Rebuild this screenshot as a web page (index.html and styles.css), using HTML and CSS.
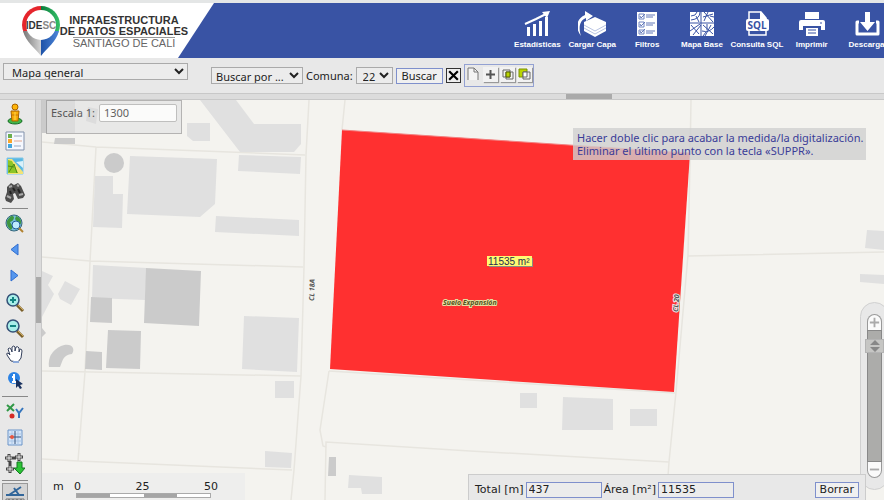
FILE: index.html
```html
<!DOCTYPE html>
<html lang="es">
<head>
<meta charset="utf-8">
<meta name="viewport" content="width=device-width, initial-scale=1">
<title>IDESC - Geovisor</title>
<link rel="stylesheet" href="styles.css">
</head>
<body>
<header class="banner">
  <div class="brand">
    <svg class="brand-pin" viewBox="0 0 40 50" aria-hidden="true">
      <defs>
        <linearGradient id="g-grey" x1="0" x2="1"><stop offset="0" stop-color="#777"/><stop offset="1" stop-color="#d4d4d4"/></linearGradient>
        <linearGradient id="g-blue" x1="0" x2="1"><stop offset="0" stop-color="#1d52a8"/><stop offset="1" stop-color="#4d86d8"/></linearGradient>
        <linearGradient id="g-green" x1="0" x2="1"><stop offset="0" stop-color="#0c7c3c"/><stop offset="1" stop-color="#35c26a"/></linearGradient>
      </defs>
      <path d="M20 0A19 19 0 0 0 1 19Q1 23 3 27H20Z" fill="#e5252c"/>
      <path d="M20 0A19 19 0 0 1 39 19Q39 23 37 27H20Z" fill="url(#g-green)"/>
      <path d="M2 25C5 36 14 42 20 50V25Z" fill="url(#g-grey)"/>
      <path d="M38 25C35 36 26 42 20 50V25Z" fill="url(#g-blue)"/>
      <circle cx="20" cy="19" r="15" fill="#fff"/>
      <text x="20" y="23" text-anchor="middle" class="pin-text">IDE<tspan fill="#888">SC</tspan></text>
    </svg>
    <div class="brand-name">
      <strong>INFRAESTRUCTURA</strong>
      <strong>DE DATOS ESPACIALES</strong>
      <span>SANTIAGO DE CALI</span>
    </div>
  </div>
  <nav class="menu">
    <a href="#"><svg viewBox="0 0 28 26"><path d="M4 16h3v9H4zM10 13h3v12h-3zM16 10h3v15h-3zM22 6h3v19h-3z" fill="#fff"/><path d="M2 13L13 8 23 3" fill="none" stroke="#fff" stroke-width="2"/><path d="M19 1l8-1-3 7z" fill="#fff"/></svg>Estadísticas</a>
    <a href="#"><svg viewBox="0 0 28 26"><path d="M17 6l11 5v9l-11 6-11-6v-9z" fill="#fff"/><path d="M6 14l11 6 11-6M6 17l11 6 11-6" fill="none" stroke="#b8c3e2"/><path d="M3 25C-3 17-2 8 7 4V0l8 5-7 5V7C2 9 0 16 3 25z" fill="#fff"/></svg>Cargar Capa</a>
    <a href="#"><svg viewBox="0 0 28 26"><path d="M4 1h20v24H4z" fill="#fff"/><path d="M6 3h5v5H6zM6 11h5v5H6zM6 19h5v4H6z" fill="#fff" stroke="#7186c3"/><path d="M7 5l1 2 4-4M7 13l1 2 4-4M7 20l1 2 4-4M13 4h9M13 6h7M13 12h9M13 14h7M13 20h9M13 22h7" fill="none" stroke="#6379b9"/></svg>Filtros</a>
    <a href="#"><svg viewBox="0 0 28 26"><path d="M2 1h24v24H2z" fill="#fff"/><path d="M13 1v24M2 12h24M3 5q5 0 6-4M3 9q9-1 9-8M8 5l3 6M16 1l9 10M15 6l10-3M20 1l-4 9M22 5l4 1M2 20l10-7M5 24l8-10M3 14l8 9M15 14l10 9M14 20q7 2 12-4M19 13v6M18 21l-3 4M23 14l-6 11" fill="none" stroke="#3953a4"/></svg>Mapa Base</a>
    <a href="#"><svg viewBox="0 0 28 26"><path d="M6 9V1h12l5 6v2M6 19v5h17v-5" fill="none" stroke="#fff" stroke-width="1.500"/><path d="M17 0l7 8h-7z" fill="#fff"/><rect x="3" y="8" width="23" height="12" rx="2" fill="#fff"/><text x="14" y="18" text-anchor="middle" class="sql-text">SQL</text></svg>Consulta SQL</a>
    <a href="#"><svg viewBox="0 0 28 26"><path d="M7 1h14v7H7zM3 9h22q2 0 2 2v8h-4v-4H5v4H1v-8q0-2 2-2zM8 17h12v8H8z" fill="#fff"/><path d="M22 12h2M10 19h8M10 22h8" stroke="#3953a4"/></svg>Imprimir</a>
    <a href="#"><svg viewBox="0 0 28 26"><path d="M12 1h5v10h5l-7.500 9L7 11h5z" fill="#fff"/><path d="M6 11H4v12h21V11h-2" fill="none" stroke="#fff" stroke-width="3" stroke-linejoin="round"/></svg>Descarga</a>
  </nav>
</header>

<form class="toolbar">
  <select class="map-select" aria-label="Mapa"><option>Mapa general</option></select>
  <div class="search">
    <select class="by-select" aria-label="Buscar por"><option>Buscar por ...</option></select>
    <label for="comuna">Comuna:</label>
    <select class="num-select" id="comuna"><option>22</option></select>
    <button type="button" class="btn">Buscar</button>
    <button type="button" class="clear" aria-label="Limpiar"><svg viewBox="0 0 12 12"><path d="M2 2l8 8M10 2l-8 8" stroke="#000" stroke-width="2"/></svg></button>
    <div class="modes">
      <button type="button" aria-label="Nueva selección"><svg viewBox="0 0 15 15"><path d="M2 13V1h6l4 4v8" fill="#f4f4f4" stroke="#777"/><path d="M8 1v4h4" fill="none" stroke="#777"/></svg></button>
      <button type="button" class="raised" aria-label="Añadir"><svg viewBox="0 0 15 15"><path d="M7.500 3v9M3 7.500h9" stroke="#555" stroke-width="2"/></svg></button>
      <button type="button" class="raised" aria-label="Intersección"><svg viewBox="0 0 15 15"><path d="M3 3h7v7H3zM6 5h7v7H6z" fill="none" stroke="#666"/><path d="M6 5h4v5H6z" fill="#b9d500" stroke="#556000"/></svg></button>
      <button type="button" class="raised" aria-label="Diferencia"><svg viewBox="0 0 15 15"><path d="M2 2h8v8H2z" fill="#b9d500" stroke="#7a9000"/><path d="M6 5h7v7H6z" fill="#eee" stroke="#666"/><path d="M6 10V5h4v5z" fill="#fff" stroke="#666"/></svg></button>
    </div>
  </div>
</form>

<div class="split-h"><span class="grip-h"></span></div>

<main class="work">
  <aside class="tools">
    <button type="button" aria-label="Street View"><svg viewBox="0 0 20 22"><ellipse cx="10" cy="18" rx="7" ry="3" fill="#43b649" stroke="#146b23"/><path d="M6 8h8l-1 10H7z" fill="#f9ad08" stroke="#a86200"/><path d="M7 12h6" stroke="#c87500"/><circle cx="10" cy="4" r="3" fill="#ffb60a" stroke="#a86200"/><path d="M10 9v8" stroke="#ffd650"/></svg></button>
    <button type="button" aria-label="Leyenda"><svg viewBox="0 0 20 22"><path d="M1 3h18v18H1z" fill="#f5f8ff" stroke="#8191ab"/><path d="M3 5h4v4H3z" fill="#6aae50"/><path d="M3 10h4v4H3z" fill="#f9a72b"/><path d="M3 15h4v4H3z" fill="#44a6dd"/><path d="M9 7h8M9 17h7" stroke="#9ba8bf"/><path d="M9 12h8" stroke="#e2a48b"/></svg></button>
    <button type="button" aria-label="Mapa de referencia"><svg viewBox="0 0 20 22"><path d="M2 3h16v16H2z" fill="#59b7e3" stroke="#80c7e6"/><path d="M3 4h4l11 13v2H3z" fill="#f3e476"/><path d="M3 5l4 1 6 12H3z" fill="#8cc528"/><path d="M4 17L9 9l3 9M3 11l6 1" fill="none" stroke="#4c8c15"/><path d="M11 7l7 6V6z" fill="#d9f1fa"/></svg></button>
    <button type="button" aria-label="Buscar"><svg viewBox="0 0 20 22"><path d="M2 6l4-4 3 2 4-2 3 3 4 9-2 3-5 1-3-6-2 1 1 5-3 4-5-2-1-3 2-6z" fill="#4e4e4e"/><path d="M4 6l3-1M12 4l2 1M2 15l4 2M14 14l4-1" stroke="#aaa" stroke-width="2"/><path d="M8 7l2 3M5 10l1 3M13 8l2 4" stroke="#222" stroke-width="2"/></svg></button>
    <hr>
    <button type="button" aria-label="Zoom total"><svg viewBox="0 0 20 22"><circle cx="9" cy="10" r="8" fill="#79bfdc" stroke="#35667b"/><path d="M2 8q4-7 7-4 0 4-4 5l3 5-2 3Q1 13 2 8zM11 3q6 2 5 8l-3-1-3-4z" fill="#3f963f"/><circle cx="11" cy="12" r="4" fill="#bdeaff" stroke="#215d99"/><path d="M14 15l4 4" stroke="#b18230" stroke-width="2"/></svg></button>
    <button type="button" aria-label="Vista anterior"><svg viewBox="0 0 20 22"><path d="M13 5v11L6 10.500z" fill="#5697ee" stroke="#2f6dd0"/></svg></button>
    <button type="button" aria-label="Vista siguiente"><svg viewBox="0 0 20 22"><path d="M6 5v11l7-5.500z" fill="#5697ee" stroke="#2f6dd0"/></svg></button>
    <button type="button" aria-label="Acercar"><svg viewBox="0 0 20 22"><path d="M12 14l6 6" stroke="#7b602a" stroke-width="3"/><path d="M13 14l5 5" stroke="#d0ac5e"/><circle cx="8" cy="9" r="6" fill="#a8eee9" stroke="#345077" stroke-width="1.500"/><path d="M8 6v6M5 9h6" stroke="#128482" stroke-width="2"/></svg></button>
    <button type="button" aria-label="Alejar"><svg viewBox="0 0 20 22"><path d="M12 14l6 6" stroke="#7b602a" stroke-width="3"/><path d="M13 14l5 5" stroke="#d0ac5e"/><circle cx="8" cy="9" r="6" fill="#a8eee9" stroke="#345077" stroke-width="1.500"/><path d="M5 9h6" stroke="#128482" stroke-width="2"/></svg></button>
    <button type="button" aria-label="Desplazar"><svg viewBox="0 0 20 22"><path d="M6 18L2 12q-1-2 1-2l2 2-2-6q1-2 3 0l1 3V4q2-2 3 0v4l1-4q2-1 3 1v4l1-3q2 0 2 2l-1 7-3 4z" fill="#fff" stroke="#34405c"/><path d="M8 19h6" stroke="#8ca9d9" stroke-width="2"/></svg></button>
    <button type="button" aria-label="Información"><svg viewBox="0 0 20 22"><circle cx="9" cy="9" r="6" fill="#2c83e5"/><path d="M9 5v2M7 8h2v5M7 13h4" fill="none" stroke="#fff" stroke-width="2"/><path d="M11 10v9l2-2 2 3 2-1-2-3 3-1z" fill="#18315f"/></svg></button>
    <hr>
    <button type="button" aria-label="Coordenadas"><svg viewBox="0 0 20 22"><path d="M2 4l7 6M9 3L2 10" stroke="#319847" stroke-width="2"/><path d="M11 8l3 4 4-5M14 12v5" fill="none" stroke="#3475bd" stroke-width="2"/><circle cx="7" cy="15" r="2.500" fill="#d42a25"/></svg></button>
    <button type="button" aria-label="Centrar"><svg viewBox="0 0 20 22"><path d="M3 3h14v15H3z" fill="#d5e5f8" stroke="#6b94c8"/><path d="M7 3v15M13 3v15M3 7h14M3 14h14" stroke="#a9c5e6"/><path d="M10 4v13M4 10h12" stroke="#37537a"/><circle cx="7" cy="10" r="2" fill="#e8553f"/></svg></button>
    <button type="button" aria-label="Descargar puntos"><svg viewBox="0 0 20 22"><path d="M4 1v8M0 5h8M14 0v8M10 4h8M5 12v8M1 16h8M8 5h3M5 8v5" stroke="#444" stroke-width="3"/><path d="M4 2v6M1 5h6M14 1v6M11 4h6M5 13v6M2 16h6" stroke="#eee"/><path d="M12 9h5v6h3l-5 6-6-6h3z" fill="#2cc336" stroke="#137920"/></svg></button>
    <hr>
    <button type="button" class="active" aria-label="Medir"><svg viewBox="0 0 20 22"><path d="M1 10h18M4 10L16 2M9 3l5 7" stroke="#32669a" stroke-width="2"/><path d="M1 14h18v6H1z" fill="#ddd" stroke="#777"/><path d="M4 14v3M8 14v3M12 14v3M16 14v3" stroke="#555"/></svg></button>
  </aside>
  <div class="split-v"><span class="grip-v"></span></div>

  <section class="map">
    <svg class="map-canvas" viewBox="42 100 842 400" preserveAspectRatio="xMinYMin slice" role="img" aria-label="Mapa">
      <g fill="none" stroke="#e7e5df" stroke-width="1.500">
        <path d="M42 142L96 147 305 155M96 147L90 262 85 372 78 461M42 257L90 261 303 267M42 371L301 376M42 459L78 461 292 470"/>
        <path d="M309 100L306 155 304 267 301 376 294 470 291 500M345 100L342 130M329 371L320 430 323 446 326 447 326 442 470 451 669 462M326 442L325 500"/>
        <path d="M691 100L690 160 688 255 676 392 669 462 668 476M688 256L884 252M329 371L675 393"/>
      </g>
      <g fill="#e0e0e0">
        <path d="M187 123h23v18h-17l-6-5zM200 100h36l18 24h47v20l-7 8h-54zM239 155l62 2-1 17-62-3zM130 156l87 3-2 45-15 13-73-3zM95 176h18v18h10l-1 34-29-1zM216 216l83 4v16l-84-4zM93 265l54 3-2 32-53-2zM244 316l55 2-2 54-55-3zM275 381h19v17h-19zM265 451l27 2-1 15-26-1zM65 281l15 8-9 16-11-6-2-5zM42 271l11 5-5 9 6 9-12 23z"/>
        <path d="M520 393h17v15h-17zM563 397l50 2v31h-51zM630 409h27v17h-27zM867 230l17 1v19l-19-2zM860 274l24 1v9l-24-2zM349 475l33 2v17h-20l-1-6h-13z"/>
      </g>
      <g fill="#cbcbcb">
        <circle cx="114" cy="163" r="10"/>
        <path d="M42 100h33v33H42zM55 138h20v6H54zM88 107l10 2-2 15-10-3zM146 268l55 3-2 55-55-3zM91 297l21 1v25l-22-1zM108 330l33 1-1 38-34-1zM86 351l16 1v18l-17-1zM329 457h7v19h-8zM42 328l4 5-4 4z"/>
        <path d="M49 367q-2-14 12-21c10-4 15 2 11 8-9 1-9 6-12 13z"/>
      </g>
      <path d="M342 130L690 153 674 392 330 369z" fill="#ff3030"/>
      <path d="M342 130L690 153" stroke="#f28080" fill="none"/>
      <text class="road" transform="translate(314 301) rotate(-88)">CL 18A</text>
      <text class="road halo" transform="translate(678 312) rotate(-86)">CL 20</text>
      <text class="zone" x="443" y="305">Suelo Expansión</text>
      <path d="M489 258h44v9h-44z" fill="#8b8b80"/>
      <path d="M487 256h45v10h-45z" fill="#fffa72"/>
      <text class="area" x="488" y="265">11535 m²</text>
    </svg>

    <div class="scale-box">
      <label for="escala">Escala 1:</label>
      <input id="escala" type="text" value="1300">
    </div>

    <p class="hint">Hacer doble clic para acabar la medida/la digitalización.<br>Eliminar el último punto con la tecla «SUPPR».</p>

    <div class="scalebar">
      <span class="unit">m</span>
      <div class="ruler">
        <div class="ticks"><span>0</span><span>25</span><span>50</span></div>
        <div class="bars"><i></i><i></i><i></i><i></i></div>
      </div>
    </div>

    <div class="zoom">
      <button type="button" class="plus" aria-label="Acercar"><svg viewBox="0 0 14 14"><path d="M7 2v10M2 7h10" stroke="#aaa" stroke-width="2"/></svg></button>
      <input type="range" min="0" max="100" value="93" aria-label="Nivel de zoom">
      <button type="button" class="minus" aria-label="Alejar"><svg viewBox="0 0 14 14"><path d="M2 7h10" stroke="#aaa" stroke-width="2"/></svg></button>
    </div>

    <form class="measure">
      <label for="total">Total [m]</label>
      <input id="total" type="text" value="437">
      <label for="area">Área [m²]</label>
      <input id="area" type="text" value="11535">
      <button type="button" class="btn">Borrar</button>
    </form>
  </section>
</main>
</body>
</html>
```
FILE: styles.css
```css
* { box-sizing: border-box; }

body {
  margin: 0;
  height: 100vh;
  display: flex;
  flex-direction: column;
  overflow: hidden;
  background: #e8e8e8;
  color: #222;
  font: 11px/14px "Noto Sans", Verdana, sans-serif;
}

button, input, select {
  font: inherit;
  color: inherit;
  margin: 0;
  padding: 0;
}

button { cursor: pointer; }
svg { display: block; }

/* Banner */
.banner {
  display: flex;
  flex: none;
  height: 58px;
  border-top: 3px solid #e4e6e6;
  background: #fff;
}

.brand {
  display: flex;
  flex: none;
  width: 178px;
  padding: 3px 0 0 21px;
}

.brand-pin { width: 40px; height: 50px; flex: none; }
.pin-text { font: bold 10px "Liberation Sans", Arial, sans-serif; fill: #333; }
.sql-text { font: bold 10px "Open Sans", sans-serif; fill: #3953a4; }

.brand-name {
  display: flex;
  flex: none;
  flex-direction: column;
  align-items: center;
  width: 126px;
  padding-top: 9px;
  font: 11px/11px "Liberation Sans", Arial, sans-serif;
  color: #333;
  white-space: nowrap;
}

.brand-name span {
  color: #666;
  border-top: 1px solid #999;
}

.menu {
  flex: 1;
  display: grid;
  grid-template-columns: repeat(7, 1fr);
  padding-left: 332px;
  margin-right: -10px;
  background: #3953a4;
  clip-path: polygon(36px 0, 100% 0, 100% 100%, 0 100%);
}

.menu a {
  display: flex;
  flex-direction: column;
  align-items: center;
  gap: 2px;
  padding-top: 8px;
  color: #fff;
  text-decoration: none;
  font: bold 8px/12px "Liberation Sans", Arial, sans-serif;
  white-space: nowrap;
}

.menu svg { width: 28px; height: 26px; }

/* Toolbar */
.toolbar {
  display: flex;
  flex: none;
  align-items: flex-start;
  gap: 23px;
  height: 35px;
  padding: 5px 3px;
}

.toolbar select {
  height: 17px;
  border: 1px solid #aaa;
  border-radius: 0;
  background-color: #ececec;
}

.toolbar .map-select { width: 185px; padding-left: 4px; }
.toolbar .by-select { width: 92px; }
.toolbar .num-select { width: 37px; padding-left: 2px; }

.search {
  display: flex;
  align-items: center;
  gap: 3px;
  padding-top: 1px;
}

.btn {
  height: 16px;
  padding: 0 5px;
  border: 1px solid #7f90cc;
  background: #f0f0f0;
  line-height: 14px;
}

.clear {
  width: 15px;
  height: 15px;
  border: 1px solid #333;
  background: #eee;
}

.modes {
  display: flex;
  gap: 2px;
  height: 23px;
  padding: 2px 1px;
  border: 1px solid #93a1d2;
}

.modes button {
  width: 15px;
  height: 15px;
  border: 0;
  background: none;
}

.modes .raised { background: #f2f2f2; box-shadow: 1px 1px 1px #999; }

/* Splitters */
.split-h {
  flex: none;
  height: 7px;
  border: 1px solid #c8c8c8;
  border-width: 1px 0;
  background: #dcdcdc;
}

.grip-h {
  display: block;
  width: 46px;
  height: 5px;
  margin-left: 64%;
  background: #aaa;
}

.split-v {
  display: flex;
  flex: none;
  align-items: center;
  width: 7px;
  border: 1px solid #c8c8c8;
  border-width: 0 1px;
  background: #dcdcdc;
}

.grip-v { width: 5px; height: 46px; background: #aaa; }

/* Work area */
.work { flex: 1; display: flex; min-height: 0; }

.tools {
  display: flex;
  flex: none;
  flex-direction: column;
  width: 35px;
  padding: 1px 7px 0 2px;
  overflow: hidden;
}

.tools button {
  flex: none;
  height: 26px;
  padding: 2px 3px;
  border: 0;
  background: none;
}

.tools svg { width: 20px; height: 22px; }
.tools hr { width: 26px; margin: 3px 0 2px; border: 0; border-top: 1px solid #888; flex: none; }
.tools .active { padding: 1px 2px; border: 1px solid #999; background: #d4d4d4; }

.map {
  position: relative;
  flex: 1;
  min-width: 0;
  overflow: hidden;
  background: #f4f3ef;
}

.map-canvas { width: 100%; height: 100%; }
.road { font: italic bold 7px "Open Sans", sans-serif; fill: #555; }
.halo, .zone { stroke: #e8e8e8; stroke-width: 2px; paint-order: stroke; }
.zone { font: italic bold 7px "Open Sans", sans-serif; fill: #54521c; stroke: #e6dfa0; }
.area { font: 10px "Liberation Sans", Arial, sans-serif; fill: #222c50; }

/* Overlays */
.scale-box {
  position: absolute;
  top: 0;
  left: 4px;
  display: flex;
  align-items: flex-start;
  gap: 4px;
  height: 34px;
  padding: 3px 4px;
  border: 1px solid #999;
  background: #e4e4e4;
  line-height: 18px;
  opacity: .7;
}

.scale-box input {
  width: 78px;
  height: 18px;
  padding: 0 4px;
  border: 1px solid #aaa;
  border-radius: 2px;
  background: #fff;
}

.hint {
  position: absolute;
  top: 28px;
  right: 18px;
  width: 293px;
  margin: 0;
  padding: 3px 4px;
  background: rgba(208, 208, 208, .8);
  color: #3a3c98;
  line-height: 13px;
  white-space: nowrap;
}

.scalebar, .measure { font-family: "DejaVu Sans", Verdana, sans-serif; }

.scalebar {
  position: absolute;
  left: 0;
  bottom: 0;
  display: flex;
  gap: 13px;
  width: 203px;
  height: 27px;
  padding: 7px 11px 0;
  background: rgba(236, 236, 236, .8);
}

.unit { width: 10px; }
.ruler { width: 135px; }
.ticks { display: flex; justify-content: space-between; height: 13px; margin: 0 -7px 0 -2px; }
.bars { display: flex; height: 5px; border: 1px solid #aaa; background: #fff; }
.bars i { flex: 1; }
.bars i:nth-child(odd) { background: #a5a5a5; }

.zoom {
  position: absolute;
  right: -5px;
  bottom: 10px;
  display: flex;
  flex-direction: column;
  align-items: center;
  width: 29px;
  padding: 11px 0;
  border: 1px solid #d0d0d0;
  border-radius: 15px;
  background: #e8e8e8;
}

.zoom button {
  width: 15px;
  height: 16px;
  border: 1px solid #999;
  background: #fafafa;
}

.zoom button svg { width: 13px; height: 13px; }
.zoom .plus { border-radius: 8px 8px 0 0; border-bottom: 0; }
.zoom .minus { border-radius: 0 0 8px 8px; border-top: 0; }

.zoom input {
  appearance: none;
  writing-mode: vertical-lr;
  direction: rtl;
  width: 19px;
  height: 132px;
  background: none;
}

.zoom input::-webkit-slider-runnable-track {
  width: 15px;
  height: 132px;
  border: 1px solid #888;
  background: #acacaa;
}

.zoom input::-webkit-slider-thumb {
  appearance: none;
  width: 19px;
  height: 14px;
  margin-left: -3px;
  border: 1px solid #b4b4b4;
  background: #c6c6c4 url("data:image/svg+xml,%3Csvg xmlns='http://www.w3.org/2000/svg' viewBox='0 0 10 12'%3E%3Cpath d='M5 0l5 5H0zM5 12l5-5H0z' fill='%23888'/%3E%3C/svg%3E") center / 10px 12px no-repeat;
}

.measure {
  position: absolute;
  right: 18px;
  bottom: 0;
  display: flex;
  align-items: center;
  gap: 2px;
  width: 398px;
  height: 26px;
  padding: 4px 6px 0;
  border: 1px solid #ccc;
  border-bottom: 0;
  background: #e8e8e8;
}

.measure input {
  width: 76px;
  height: 16px;
  padding: 0 2px;
  border: 1px solid #7f90cc;
  background: #ececec;
}

.measure .btn { margin-left: auto; padding: 0 4px; }
```
